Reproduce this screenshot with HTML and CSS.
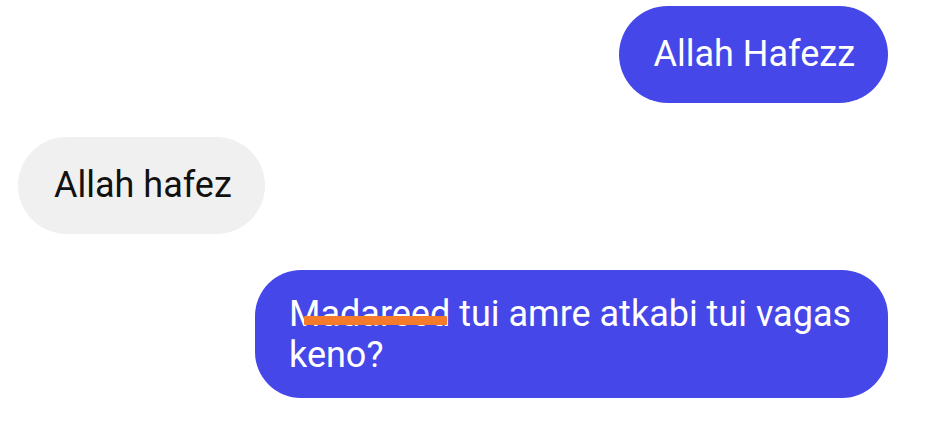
FILE: index.html
```html
<!DOCTYPE html>
<html lang="en">
<head>
<meta charset="utf-8">
<link rel="stylesheet" href="styles.css">
</head>
<body>
<div class="chat">
  <div class="msg msg-out msg-first">Allah Hafezz</div>
  <div class="msg msg-in">Allah hafez</div>
  <div class="msg msg-out msg-long"><span class="struck">Madareed</span> tui amre atkabi tui vagas keno?</div>
</div>
</body>
</html>
```

FILE: styles.css
```css
html, body {
  margin: 0;
  padding: 0;
  background: #ffffff;
}

.chat {
  width: 949px;
  height: 437px;
  display: flex;
  flex-direction: column;
  padding-top: 6px;
  box-sizing: border-box;
  font-family: Roboto, "Noto Sans", sans-serif;
  font-size: 36px;
  line-height: 41px;
}

.msg {
  box-sizing: border-box;
  border-radius: 49px;
  padding: 28px 34px;
  white-space: nowrap;
}

.msg-out {
  align-self: flex-end;
  margin-right: 61px;
  background: #4647e8;
  color: #ffffff;
}

.msg-in {
  align-self: flex-start;
  margin-left: 18px;
  margin-top: 34px;
  background: #f0f0f0;
  color: #111111;
  padding-left: 36px;
  padding-right: 33px;
}

.msg-first {
  padding-left: 35px;
  padding-right: 33px;
}

.msg-long {
  margin-top: 36px;
  width: 633px;
  white-space: normal;
  padding: 24px 34px 22px;
  border-radius: 46px;
}

.struck {
  position: relative;
}

.struck::after {
  content: "";
  position: absolute;
  left: 15px;
  right: 3px;
  top: 23px;
  height: 9px;
  background: #f47a2c;
  border-radius: 1px;
}
```
